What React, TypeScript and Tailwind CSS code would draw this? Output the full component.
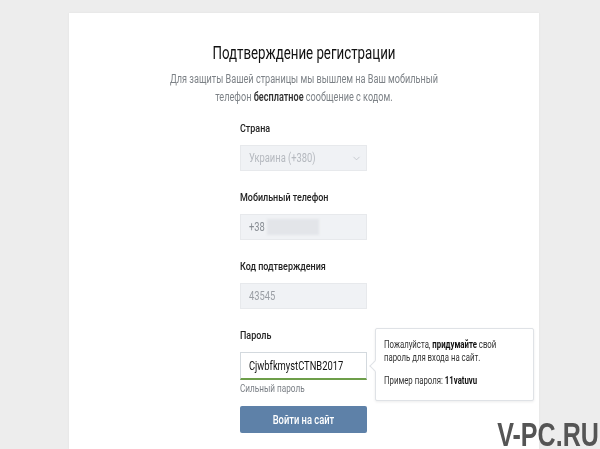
import { ChevronDown } from "lucide-react";

// the screenshot uses a condensed face; narrow Roboto to match
function Cond({ children, center = false }: { children: React.ReactNode; center?: boolean }) {
  return (
    <span className={center ? "inline-block origin-center scale-x-[0.78]" : "inline-block origin-left scale-x-[0.78]"}>
      {children}
    </span>
  );
}

function Field({ label, children }: { label: string; children: React.ReactNode }) {
  return (
    <div className="flex flex-col">
      <label className="h-[14px] whitespace-nowrap text-[11.5px] font-medium leading-[14px] text-[#222]">
        <Cond>{label}</Cond>
      </label>
      <div className="mt-[10px]">{children}</div>
    </div>
  );
}

export default function App() {
  return (
    <div
      className="relative h-[449px] w-[600px] overflow-hidden bg-[#ededed] pt-[13px]"
      style={{ fontFamily: "Roboto, 'Noto Sans', sans-serif" }}
    >
      <div className="ml-[69px] h-[436px] w-[470px] bg-white shadow-[0_0_2px_rgba(0,0,0,0.06)]">
        <h1 className="origin-center scale-x-[0.76] pt-[29px] text-center text-[17.5px] leading-[22px] text-[#111]">
          Подтверждение регистрации
        </h1>
        <p className="mt-[6px] origin-center scale-x-[0.76] whitespace-nowrap text-center text-[12px] leading-[18px] text-[#7d8287]">
          Для защиты Вашей страницы мы вышлем на Ваш мобильный
          <br />
          телефон <b className="font-semibold text-[#333]">бесплатное</b> сообщение с кодом.
        </p>

        <div className="ml-[171px] mt-[15px] flex w-[127px] flex-col gap-[19px]">
          <Field label="Страна">
            <div className="flex h-[26px] items-center justify-between whitespace-nowrap border border-[#e7e9ec] bg-[#f0f2f5] pl-[8px] pr-[4px] text-[12px] text-[#b5b9bf]">
              <Cond>Украина (+380)</Cond>
              <ChevronDown className="h-[11px] w-[11px] text-[#b5b9bf]" strokeWidth={1.5} />
            </div>
          </Field>

          <Field label="Мобильный телефон">
            <div className="flex h-[26px] items-center border border-[#e7e9ec] bg-[#f0f2f5] pl-[8px] text-[12px] text-[#8a8f95]">
              <Cond>+38</Cond>
              <span className="ml-[-2px] h-[16px] w-[52px] bg-[#e3e5e9] blur-[1px]" />
            </div>
          </Field>

          <Field label="Код подтверждения">
            <div className="flex h-[26px] items-center border border-[#e7e9ec] bg-[#f0f2f5] pl-[8px] text-[12px] text-[#9a9ea4]">
              <Cond>43545</Cond>
            </div>
          </Field>

          <div className="flex flex-col">
            <label className="h-[14px] text-[11.5px] font-medium leading-[14px] text-[#222]">
              <Cond>Пароль</Cond>
            </label>
            <div className="relative mt-[10px]">
              <div className="flex h-[28px] items-center whitespace-nowrap border border-b-2 border-[#d3d9de] border-b-[#6d9e4a] bg-white pl-[8px] text-[12px] text-[#111]">
                <Cond>CjwbfkmystCTNB2017</Cond>
              </div>
              <div className="absolute left-[135px] top-[-24px] w-[159px] whitespace-nowrap rounded-[2px] border border-[#dfe2e6] bg-white px-[8px] pb-[12px] pt-[10px] text-[10px] leading-[12.5px] text-[#333] shadow-[0_1px_3px_rgba(0,0,0,0.08)]">
                <span className="absolute left-[-5px] top-[33px] h-[8px] w-[8px] rotate-45 border-b border-l border-[#dfe2e6] bg-white" />
                <p>
                  <Cond>
                    Пожалуйста, <b className="font-bold text-[#111]">придумайте</b> свой
                  </Cond>
                  <br />
                  <Cond>пароль для входа на сайт.</Cond>
                </p>
                <p className="mt-[11px]">
                  <Cond>
                    Пример пароля: <b className="font-bold text-[#111]">11vatuvu</b>
                  </Cond>
                </p>
              </div>
            </div>
            <span className="mt-[3px] text-[10.5px] leading-[12px] text-[#7a7f85]">
              <Cond>Сильный пароль</Cond>
            </span>
            <button
              type="button"
              className="mt-[11px] h-[27px] w-full rounded-[2px] bg-[#5e81a8] text-[12px] font-medium text-white"
            >
              <Cond center>Войти на сайт</Cond>
            </button>
          </div>
        </div>
      </div>

      <span
        className="absolute bottom-[0px] right-[1px] origin-right scale-x-[0.76] text-[33px] font-bold leading-[28px] text-[#555]"
        style={{ fontFamily: "'Liberation Sans', Arial, sans-serif" }}
      >
        V-PC.RU
      </span>
    </div>
  );
}
